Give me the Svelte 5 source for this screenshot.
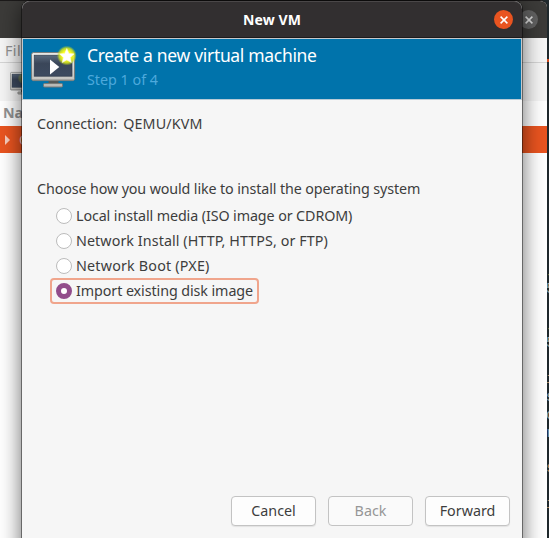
<script>
  const methods = [
    { label: 'Local install media (ISO image or CDROM)', spacing: -0.1 },
    { label: 'Network Install (HTTP, HTTPS, or FTP)', spacing: 0.08 },
    { label: 'Network Boot (PXE)', spacing: 0.2 },
    { label: 'Import existing disk image', spacing: -0.08 }
  ];
  let selected = $state(3);
  const fragments = [
    [269, '-', '#c77f3c'], [283, '5', '#9ba3a4'], [323, '-', '#c77f3c'], [337, '5', '#9ba3a4'],
    [373, 'i', '#b88662'], [391, 's', '#a1aab0'], [409, 'c', '#9ba3a4'], [427, 'r', '#7897b5'],
    [462, 's', '#bd8965'], [498, 'i', '#b88662']
  ];
</script>

{#snippet monitor()}
  <defs>
    <linearGradient id="screen" x2="0" y2="1">
      <stop offset="0" stop-color="#5b6b7e" /><stop offset=".4" stop-color="#3a4659" /><stop offset="1" stop-color="#3d4b60" />
    </linearGradient>
    <linearGradient id="bezel" x2="0" y2="1">
      <stop offset="0" stop-color="#f4f4f2" /><stop offset="1" stop-color="#c3c3bf" />
    </linearGradient>
    <radialGradient id="glow">
      <stop offset="0.45" stop-color="#fbff20" /><stop offset="0.75" stop-color="#d5e51b" stop-opacity=".85" /><stop offset="1" stop-color="#b0d030" stop-opacity="0" />
    </radialGradient>
  </defs>
  <path d="M17.5 34h10v4h-10z" fill="#555857" />
  <rect x="12.5" y="37.5" width="19" height="3.5" rx="1" fill="#b9bab7" stroke="#777976" />
  <rect x=".6" y="6.6" width="43" height="28" rx="1.8" fill="url(#bezel)" stroke="#787a77" />
  <path d="M1.5 33.8h41.2" stroke="#999b98" />
  <rect x="3.2" y="9.2" width="37.8" height="21" fill="url(#screen)" stroke="#303b4b" stroke-width=".7" />
  <path d="M19 13.5v15l9.3-7.5z" fill="#fff" />
{/snippet}

{#snippet cross()}
  <svg width="8" height="8" viewBox="0 0 8 8"><path d="M.6.6l6.8 6.8M7.4.6L.6 7.4" stroke="currentColor" stroke-width="1.5" /></svg>
{/snippet}

<div class="desktop">
  <main class="manager">
    <header class="manager-title"><span class="close inactive">{@render cross()}</span></header>
    <nav>File</nav>
    <div class="toolbar"><svg width="29" height="27" viewBox="0 0 46 42">{@render monitor()}<circle cx="21" cy="16" r="9" fill="url(#glow)" opacity=".25" /></svg></div>
    <div class="columns">Name</div>
    <div class="row"><i></i><span>QEMU/KVM</span></div>
  </main>
  <aside>
    <b class="accent"></b>
    {#each fragments as [top, glyph, color]}
      <span style="top:{top}px;color:{color}">{glyph}</span>
    {/each}
  </aside>

  <section class="dialog">
    <header class="dialog-title"><h1>New VM</h1><button class="close" aria-label="Close">{@render cross()}</button></header>
    <div class="banner">
      <svg class="vm" width="47" height="43" viewBox="0 -1 47 43">
        {@render monitor()}
        <circle cx="35.8" cy="9.6" r="10" fill="url(#glow)" />
        <path d="M35.8 2.6l2.1 4.8 5.1.5-3.8 3.5 1.1 5.1-4.5-2.6-4.5 2.6 1.1-5.1-3.8-3.5 5.1-.5z" fill="#fff" stroke="#fffed5" stroke-width=".6" />
      </svg>
      <div><h2>Create a new virtual machine</h2><p>Step 1 of 4</p></div>
    </div>
    <div class="content">
      <div class="connection"><span>Connection:</span><span class="host">QEMU/KVM</span></div>
      <p class="prompt">Choose how you would like to install the operating system</p>
      <div class="methods" role="radiogroup">
        {#each methods as method, i}
          <button class="method" class:selected={selected === i} role="radio" aria-checked={selected === i} onclick={() => (selected = i)}>
            <i></i><span style="letter-spacing:{method.spacing}px">{method.label}</span>
          </button>
        {/each}
      </div>
      <footer><button>Cancel</button><button disabled>Back</button><button>Forward</button></footer>
    </div>
  </section>
</div>

<style>
  * { box-sizing: border-box; }
  .desktop { position: relative; width: 549px; height: 538px; overflow: hidden; background: #20292d; font: 14.3px/20px "Noto Sans", "Open Sans", sans-serif; color: #3d3d3d; }
  h1, h2, p { margin: 0; font-weight: 400; }
  button { font: inherit; color: inherit; padding: 0; border: 0; }
  .manager { width: 547px; height: 538px; background: #fff; border-top: 1px solid #1c1a1a; border-radius: 0 7px 0 0; overflow: hidden; }
  .manager-title { height: 37px; background: #3c3b39; display: flex; align-items: center; justify-content: flex-end; padding-right: 9px; }
  .close { width: 19px; height: 19px; border-radius: 50%; background: #e95420; color: #fff; display: grid; place-items: center; }
  .inactive { background: #626262; color: #dedede; }
  nav { height: 25px; padding: 3px 5px; background: #f6f6f6; border-bottom: 1px solid #d5d5d5; color: #929292; letter-spacing: .4px; }
  .toolbar { height: 38px; background: #f5f5f5; padding: 5px 0 0 10px; }
  .columns { height: 25px; padding: 2px 3px; color: #929292; font-weight: 700; }
  .row { height: 27px; background: #e95420; color: #f7cdbe; display: flex; align-items: center; }
  .row i { margin-left: 5px; border: 5px solid transparent; border-left-color: #f8cdbd; border-right: 0; }
  .row span { margin-left: 9px; }
  aside { position: absolute; inset: 0 0 0 547px; background: #20292d; overflow: hidden; }
  aside span { position: absolute; left: -1px; font: 14px/12px "Liberation Mono", monospace; }
  .accent { position: absolute; top: 59px; width: 2px; height: 3px; background: #d44b1e; }
  .dialog { position: absolute; left: 22px; top: 1px; width: 500px; height: 560px; background: #f6f6f6; border-radius: 8px 8px 0 0; box-shadow: 0 0 0 1px rgba(0,0,0,.42), 0 3px 22px rgba(0,0,0,.62); }
  .dialog-title { height: 37px; border-radius: 8px 8px 0 0; background: #322f30; border-top: 1px solid #4a4748; border-bottom: 1px solid #1d1b1c; display: grid; grid-template-columns: 1fr auto 1fr; align-items: center; }
  .dialog-title h1 { grid-column: 2; font-size: 14px; font-weight: 700; color: #fff; letter-spacing: .1px; }
  .dialog-title .close { justify-self: end; margin-right: 9px; }
  .banner { height: 62px; background: #0073ab; border: 1px solid #c5c9cc; border-bottom-color: #b8cbd6; display: flex; padding: 5px 0 0 8px; gap: 9px; color: #fff; }
  .vm { flex: none; margin-top: 1px; }
  h2 { font-size: 17.5px; line-height: 22px; letter-spacing: -.32px; white-space: nowrap; }
  .banner p { color: #4da9dc; margin-top: 4px; }
  .content { height: 438px; padding: 14px 12px 12px 15px; display: flex; flex-direction: column; }
  .connection { display: flex; gap: 6px; }
  .connection span { letter-spacing: -.03px; }
  .connection .host { letter-spacing: .15px; }
  .prompt { margin-top: 45px; letter-spacing: -.12px; white-space: nowrap; }
  .methods { display: flex; flex-direction: column; align-items: flex-start; margin: 4px 0 0 13px; }
  .method { height: 25px; display: flex; align-items: center; gap: 4px; padding: 0 4px; border: 2px solid transparent; border-radius: 4px; background: none; white-space: nowrap; }
  .method i { width: 16px; height: 16px; border: 1px solid #bcbcbc; border-radius: 50%; background: #fff; }
  .method.selected { border-color: #f0a58c; height: 26px; }
  .method.selected i { border: 5px solid #924d8b; }
  footer { margin-top: auto; display: flex; justify-content: flex-end; gap: 12px; }
  footer button { width: 85px; height: 30px; border: 1px solid #c3c3c3; border-radius: 4px; background: #fdfdfd; box-shadow: 0 1px 1px rgba(0,0,0,.08); }
  footer button:disabled { background: #fafafa; color: #969696; box-shadow: none; }
</style>
